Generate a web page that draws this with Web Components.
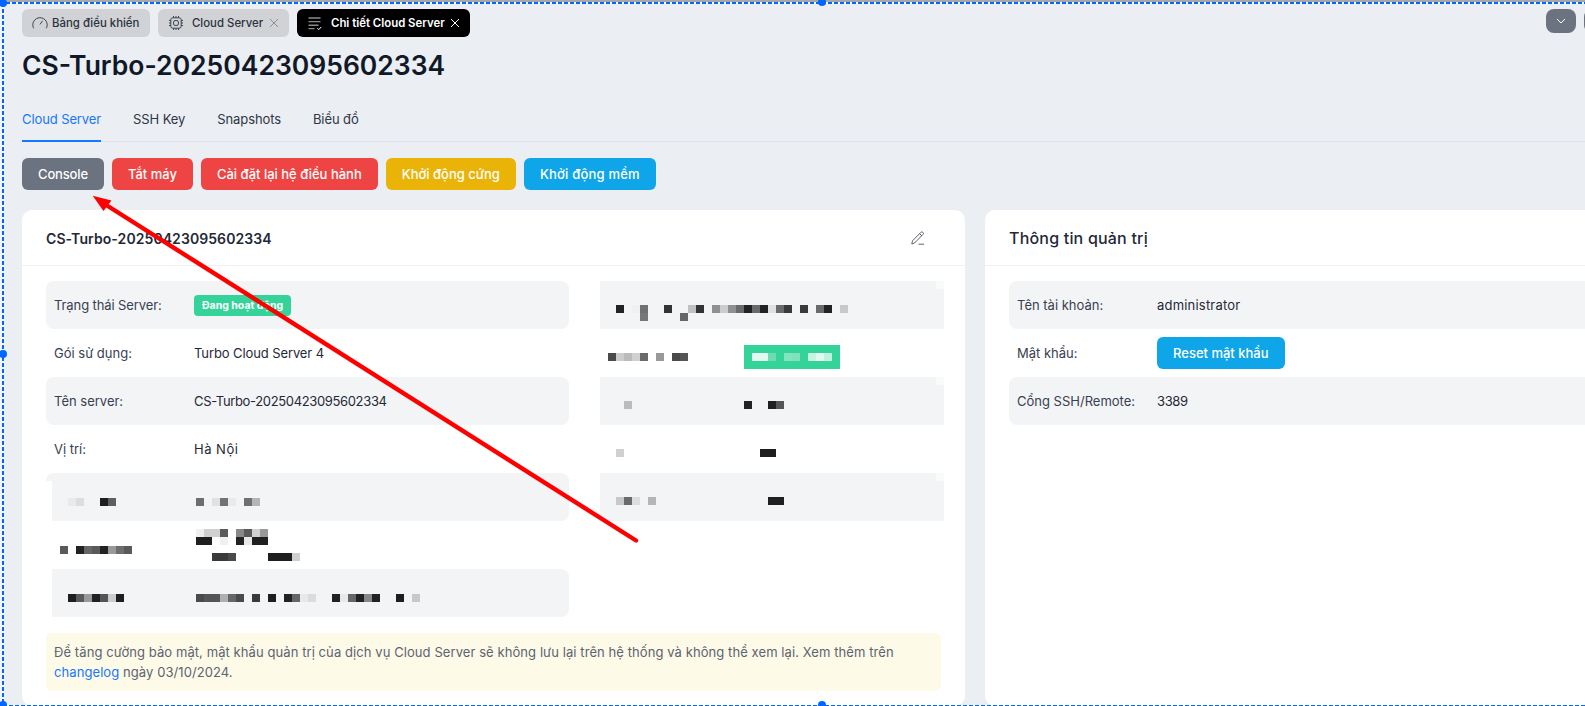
<!DOCTYPE html>
<html lang="vi">
<head>
<meta charset="utf-8">
<title>Chi tiết Cloud Server</title>
<style>
html, body {
  margin: 0;
  height: 100%;
  overflow: hidden;
  background: #ebeef3;
  font-family: Inter, "Noto Sans", sans-serif;
}
</style>
</head>
<body>
<server-page></server-page>

<script>
const ICONS = {
  gauge: '<path d="M1.6 13.2A7.2 7.2 0 1 1 14.4 13.2M8 9.4l2.6-3.6"/>',
  chip: '<rect x="2.8" y="2.8" width="10.4" height="10.4" rx="2"/><rect x="5.6" y="5.6" width="4.8" height="4.8" rx="1.4"/><path d="M5.5 1v1.8M8 1v1.8M10.5 1v1.8M5.5 13.2V15M8 13.2V15M10.5 13.2V15M1 5.5h1.8M1 8h1.8M1 10.5h1.8M13.2 5.5H15M13.2 8H15M13.2 10.5H15"/>',
  list: '<path d="M1.5 3h12M1.5 6.6h12M1.5 10.2h10M1.5 13.6h6" stroke-width="1.4"/><path d="M10.4 13.4l1.4 1.2 2.4-2.6" stroke="#fff" stroke-width="1"/>'
}

customElements.define('tab-chip',
  class extends HTMLElement {
    connectedCallback() {
      const active = this.hasAttribute('active')
      const closable = this.hasAttribute('closable')
      this.attachShadow({ mode: 'open' }).innerHTML = `
<style>
:host {
  display: flex;
  align-items: center;
  height: 28px;
  width: var(--w);
  box-sizing: border-box;
  padding-left: 10px;
  background: #d0d2d6;
  border-radius: 6px;
  color: #2b3340;
  font-size: 11.4px;
  font-weight: 500;
  white-space: nowrap;
}
:host([active]) {
  background: #000;
  color: #fff;
  font-weight: 600;
}
svg {
  flex: none;
  width: 16px;
  height: 16px;
  fill: none;
  stroke: ${active ? '#8a8a8a' : '#3f4650'};
  stroke-width: 1;
}
.label { margin-left: var(--label-gap, 4px); }
.close {
  width: 10px;
  height: 10px;
  margin-left: auto;
  margin-right: 10px;
  stroke: ${active ? '#fff' : '#8b8f96'};
}
</style>
<svg viewBox="0 0 16 16">${ICONS[this.getAttribute('icon')]}</svg>
<span class="label"><slot></slot></span>
${closable ? '<svg class="close" viewBox="0 0 10 10"><path d="M1 1l8 8M9 1L1 9"/></svg>' : ''}
`
    }
  }
)

const topBarTemplate = document.createElement('template')
topBarTemplate.innerHTML = `
<style>
:host {
  display: flex;
  gap: 8px;
  margin-right: -29px;
}
.spacer { flex: 1; }
.drop {
  flex: none;
  width: 30px;
  height: 24px;
  display: flex;
  align-items: center;
  justify-content: center;
  background: #6b7280;
  border-radius: 8px;
}
svg {
  width: 10px;
  height: 6px;
  fill: none;
  stroke: #fff;
  stroke-width: 1;
}
</style>
<slot></slot>
<div class="spacer"></div>
<div class="drop"><svg viewBox="0 0 10 6"><path d="M1 1l4 4 4-4"/></svg></div>
<div class="drop"></div>
`

customElements.define('top-bar',
  class extends HTMLElement {
    constructor() {
      super()
      this.attachShadow({ mode: 'open' })
        .appendChild(topBarTemplate.content.cloneNode(true))
    }
  }
)

const subNavTemplate = document.createElement('template')
subNavTemplate.innerHTML = `
<style>
:host {
  display: flex;
  gap: 32px;
  margin-top: 26px;
  margin-right: -22px;
  border-bottom: 1px solid #dfe3e9;
  font-size: 13px;
  letter-spacing: -.1px;
  color: #2f3744;
}
</style>
<slot></slot>
`

customElements.define('sub-nav',
  class extends HTMLElement {
    constructor() {
      super()
      this.attachShadow({ mode: 'open' })
        .appendChild(subNavTemplate.content.cloneNode(true))
    }
  }
)

const subNavItemTemplate = document.createElement('template')
subNavItemTemplate.innerHTML = `
<style>
:host {
  display: block;
  height: 33px;
  line-height: 21px;
  margin-bottom: -1px;
}
:host([active]) {
  color: #1677ff;
  box-shadow: inset 0 -2px 0 #1677ff;
}
</style>
<slot></slot>
`

customElements.define('sub-nav-item',
  class extends HTMLElement {
    constructor() {
      super()
      this.attachShadow({ mode: 'open' })
        .appendChild(subNavItemTemplate.content.cloneNode(true))
    }
  }
)

const actButtonTemplate = document.createElement('template')
actButtonTemplate.innerHTML = `
<style>
:host {
  display: inline-flex;
  align-items: center;
  height: 32px;
  padding: 0 16px;
  border-radius: 6px;
  background: var(--btn, #6b7280);
  color: #fff;
  font-size: 13px;
  font-weight: 500;
  letter-spacing: var(--track, 0);
  white-space: nowrap;
}
</style>
<slot></slot>
`

customElements.define('act-button',
  class extends HTMLElement {
    constructor() {
      super()
      this.attachShadow({ mode: 'open' })
        .appendChild(actButtonTemplate.content.cloneNode(true))
    }
  }
)

const infoCardTemplate = document.createElement('template')
infoCardTemplate.innerHTML = `
<style>
:host {
  display: block;
  flex: none;
  width: 943px;
  height: 496px;
  box-sizing: border-box;
  background: #fff;
  border-radius: 10px;
}
header {
  display: flex;
  align-items: center;
  justify-content: space-between;
  height: 55px;
  padding: 0 24px;
  border-bottom: 1px solid #eef0f3;
  color: #1f2937;
  font-size: 14px;
  font-weight: 600;
}
.body { padding: 15px 24px; }
</style>
<header><span><slot name="title"></slot></span><slot name="action"></slot></header>
<div class="body"><slot></slot></div>
`

customElements.define('info-card',
  class extends HTMLElement {
    constructor() {
      super()
      this.attachShadow({ mode: 'open' })
        .appendChild(infoCardTemplate.content.cloneNode(true))
    }
  }
)

const infoRowTemplate = document.createElement('template')
infoRowTemplate.innerHTML = `
<style>
:host {
  position: relative;
  display: grid;
  grid-template-columns: 140px 1fr;
  align-items: center;
  height: 48px;
  padding: 0 8px;
  border-radius: 8px;
  color: #374151;
  font-size: 13px;
}
:host([striped]) { background: #f3f4f6; }
.value { color: #1f2937; min-width: 0; }
.cut {
  position: absolute;
  left: 0;
  bottom: 0;
  width: 6px;
  background: #fff;
}
</style>
<div><slot name="label"></slot></div>
<div class="value"><slot></slot></div>
`

customElements.define('info-row',
  class extends HTMLElement {
    constructor() {
      super()
      this.attachShadow({ mode: 'open' })
        .appendChild(infoRowTemplate.content.cloneNode(true))
    }

    connectedCallback() {
      // the blur in the screenshot eats the row corners, redraw those bits
      if (this.hasAttribute('cut')) {
        const cut = document.createElement('div')
        cut.className = 'cut'
        cut.style.top = this.getAttribute('cut') + 'px'
        this.shadowRoot.appendChild(cut)
      }
    }
  }
)

const blurRowTemplate = document.createElement('template')
blurRowTemplate.innerHTML = `
<style>
:host {
  position: relative;
  display: flex;
  align-items: center;
  height: 48px;
  padding-left: 8px;
}
:host([striped]) { background: #f3f4f6; }
.notch {
  position: absolute;
  top: 0;
  right: 0;
  width: 8px;
  height: 8px;
  background: #f9fafa;
}
</style>
<slot></slot>
`

customElements.define('blur-row',
  class extends HTMLElement {
    constructor() {
      super()
      this.attachShadow({ mode: 'open' })
        .appendChild(blurRowTemplate.content.cloneNode(true))
    }

    connectedCallback() {
      if (this.hasAttribute('striped')) {
        const notch = document.createElement('div')
        notch.className = 'notch'
        this.shadowRoot.appendChild(notch)
      }
    }
  }
)

const blurPillTemplate = document.createElement('template')
blurPillTemplate.innerHTML = `
<style>
:host {
  display: block;
  width: 88px;
  margin-top: 8px;
  padding: 8px 0 8px 8px;
  background: #34d399;
}
</style>
<slot></slot>
`

customElements.define('blur-pill',
  class extends HTMLElement {
    constructor() {
      super()
      this.attachShadow({ mode: 'open' })
        .appendChild(blurPillTemplate.content.cloneNode(true))
    }
  }
)

// Redacted text: each line is a run of 8px cells, "." leaves a cell empty.
customElements.define('px-mosaic',
  class extends HTMLElement {
    connectedCallback() {
      const lines = this.getAttribute('cells').split('|').map((line) => line.trim().split(/\s+/))
      const rows = lines.map((line) => `<div class="line">${line.map((c) =>
        `<i style="background:${c === '.' ? 'transparent' : '#' + c}"></i>`).join('')}</div>`).join('')
      this.attachShadow({ mode: 'open' }).innerHTML = `
<style>
:host {
  display: block;
  margin-top: ${this.getAttribute('top') || 0}px;
  margin-left: ${this.getAttribute('left') || 0}px;
  width: ${this.getAttribute('width') ? this.getAttribute('width') + 'px' : 'auto'};
  flex: none;
}
.line { display: flex; height: 8px; }
i { flex: none; display: block; width: 8px; height: 8px; }
</style>
${rows}
`
    }
  }
)

const statusBadgeTemplate = document.createElement('template')
statusBadgeTemplate.innerHTML = `
<style>
:host {
  display: inline-block;
  padding: 0 8px;
  height: 21px;
  line-height: 22px;
  border-radius: 4px;
  background: #34d399;
  color: #fff;
  font-size: 10.5px;
  font-weight: 700;
  vertical-align: middle;
}
</style>
<slot></slot>
`

customElements.define('status-badge',
  class extends HTMLElement {
    constructor() {
      super()
      this.attachShadow({ mode: 'open' })
        .appendChild(statusBadgeTemplate.content.cloneNode(true))
    }
  }
)

const noteBoxTemplate = document.createElement('template')
noteBoxTemplate.innerHTML = `
<style>
:host {
  display: block;
  margin-top: 16px;
  padding: 9px 8px;
  border-radius: 6px;
  background: #fefae8;
  color: #5b6472;
  font-size: 13px;
  letter-spacing: .08px;
  line-height: 20px;
}
</style>
<slot></slot>
`

customElements.define('note-box',
  class extends HTMLElement {
    constructor() {
      super()
      this.attachShadow({ mode: 'open' })
        .appendChild(noteBoxTemplate.content.cloneNode(true))
    }
  }
)

// Screenshot annotations: the red arrow and the dashed selection frame.
const markOverlayTemplate = document.createElement('template')
markOverlayTemplate.innerHTML = `
<style>
:host {
  position: fixed;
  inset: 0;
  pointer-events: none;
}
svg { position: absolute; inset: 0; width: 100%; height: 100%; }
.edge { position: absolute; }
.top {
  top: 0;
  left: 0;
  right: 0;
  height: 4px;
  background:
    repeating-linear-gradient(90deg, #0066ff 0 4px, #fff 4px 6px) 0 2px / 100% 2px no-repeat,
    linear-gradient(#a8a8a8, #a8a8a8) 0 0 / 100% 2px no-repeat;
}
.left {
  top: 3px;
  bottom: 0;
  left: 2px;
  width: 2px;
  background: repeating-linear-gradient(180deg, #0066ff 0 4px, #fff 4px 6px);
}
.strip {
  top: 0;
  bottom: 0;
  left: 0;
  width: 2px;
  background: #f4f4f4;
}
.bottom {
  left: 3px;
  right: 0;
  top: 705px;
  height: 1px;
  background: repeating-linear-gradient(90deg, #0066ff 0 4px, #fff 4px 6px);
}
.dot {
  position: absolute;
  width: 8px;
  height: 8px;
  margin: -4px 0 0 -4px;
  border-radius: 50%;
  background: #0066ff;
}
</style>
<div class="edge strip"></div>
<div class="edge top"></div>
<div class="edge left"></div>
<div class="edge bottom"></div>
<div class="dot" style="left:3px;top:3px"></div>
<div class="dot" style="left:822px;top:2px"></div>
<div class="dot" style="left:3px;top:354px"></div>
<div class="dot" style="left:3px;top:705px"></div>
<div class="dot" style="left:822px;top:705px"></div>
<svg viewBox="0 0 1585 706">
  <line x1="636" y1="540.5" x2="107" y2="205.5" stroke="#ff0000" stroke-width="4.4" stroke-linecap="round"/>
  <polygon points="92.7,195.7 111.5,200.6 103.5,211" fill="#ff0000"/>
</svg>
`

customElements.define('mark-overlay',
  class extends HTMLElement {
    constructor() {
      super()
      this.attachShadow({ mode: 'open' })
        .appendChild(markOverlayTemplate.content.cloneNode(true))
    }
  }
)

const serverPageTemplate = document.createElement('template')
serverPageTemplate.innerHTML = `
<style>
:host {
  display: block;
  box-sizing: border-box;
  height: 706px;
  padding: 9px 0 0 22px;
  overflow: hidden;
  font-family: Inter, "Noto Sans", sans-serif;
}
.chips { display: flex; gap: 8px; }
h1 {
  margin: 10px 0 0;
  color: #111827;
  font-size: 26.5px;
  line-height: 36px;
  font-weight: 600;
}
.actions {
  display: flex;
  gap: 8px;
  margin-top: 16px;
}
.cards {
  display: flex;
  gap: 20px;
  margin-top: 20px;
}
.columns {
  display: grid;
  grid-template-columns: 523px 344px;
  column-gap: 31px;
}
.edit {
  width: 14px;
  height: 14px;
  margin-right: 16px;
  fill: none;
  stroke: #5b6472;
  stroke-width: 1;
}
a { color: #1677ff; text-decoration: none; }
.server-title { display: inline-block; padding-top: 2px; letter-spacing: .08px; }
.admin-title { font-size: 16px; font-weight: 500; letter-spacing: .2px; }
.tight { letter-spacing: -.1px; }
.digits { letter-spacing: -.35px; }
.wide { letter-spacing: .2px; }
.place { letter-spacing: .5px; }
.port { letter-spacing: -.4px; }
</style>
<top-bar>
  <div class="chips">
    <tab-chip icon="gauge" style="--w:128px">Bảng điều khiển</tab-chip>
    <tab-chip icon="chip" closable style="--w:131px;--label-gap:8px">Cloud Server</tab-chip>
    <tab-chip icon="list" closable active style="--w:173px;--label-gap:8px">Chi tiết Cloud Server</tab-chip>
  </div>
</top-bar>
<h1>CS-Turbo-20250423095602334</h1>
<sub-nav>
  <sub-nav-item active>Cloud Server</sub-nav-item>
  <sub-nav-item>SSH Key</sub-nav-item>
  <sub-nav-item>Snapshots</sub-nav-item>
  <sub-nav-item>Biểu đồ</sub-nav-item>
</sub-nav>
<div class="actions">
  <act-button style="--track:-.15px">Console</act-button>
  <act-button style="--btn:#ef4444">Tắt máy</act-button>
  <act-button style="--btn:#ef4444">Cài đặt lại hệ điều hành</act-button>
  <act-button style="--btn:#eab308">Khởi động cứng</act-button>
  <act-button style="--btn:#0ea5e9;--track:.2px">Khởi động mềm</act-button>
</div>
<div class="cards">
  <info-card>
    <span slot="title" class="server-title">CS-Turbo-20250423095602334</span>
    <svg slot="action" class="edit" viewBox="0 0 14 14"><path d="M.8 13l.7-3.2L9.9 1.3a1.3 1.3 0 0 1 1.9 0l.2.2a1.3 1.3 0 0 1 0 1.9L3.6 12zM8.6 2.6l2.4 2.4M7.5 13.2h5.5"/></svg>
    <div class="columns">
      <div>
        <info-row striped><span slot="label" class="tight">Trạng thái Server:</span><status-badge>Đang hoạt động</status-badge></info-row>
        <info-row><span slot="label">Gói sử dụng:</span><span class="tight">Turbo Cloud Server 4</span></info-row>
        <info-row striped><span slot="label">Tên server:</span><span class="digits">CS-Turbo-20250423095602334</span></info-row>
        <info-row><span slot="label">Vị trí:</span><span class="place">Hà Nội</span></info-row>
        <info-row striped cut="8">
          <px-mosaic slot="label" top="10" left="14" cells="e9eaec dcdde0 . . 1f1f1f 5f5f5f"></px-mosaic>
          <px-mosaic top="10" left="2" cells="6d6d6d . e0e1e3 727272 e9eaec . 707070 b5b5b5"></px-mosaic>
        </info-row>
        <info-row>
          <px-mosaic slot="label" top="9" left="6" cells="5a5a5a . 222222 666666 5a5a5a 222222 999999 6e6e6e 5a5a5a"></px-mosaic>
          <px-mosaic left="2" cells="f0f0f0 d0d0d0 d0d0d0 5a5a5a . 888888 5a5a5a d0d0d0 999999|1f1f1f 1f1f1f . f0f0f0 . 222222 e8e8e8 1f1f1f 1f1f1f|.|. . 3a3a3a 3a3a3a 4a4a4a . . . . 1f1f1f 1f1f1f 1f1f1f d0d0d0"></px-mosaic>
        </info-row>
        <info-row striped cut="0">
          <px-mosaic slot="label" top="9" left="14" cells="1f1f1f 5a5a5a 999999 222222 555555 cccccc 1f1f1f"></px-mosaic>
          <px-mosaic top="9" left="2" cells="4a4a4a 555555 555555 b0b0b0 666666 4a4a4a . 3a3a3a . 1f1f1f . 222222 666666 e8e8e8 dcdcdc . . 222222 e8e8e8 666666 222222 888888 222222 . . 1f1f1f . c8c8c8"></px-mosaic>
        </info-row>
      </div>
      <div>
        <blur-row striped>
          <px-mosaic top="16" cells=". 222222 . f0f0f2 707070 . . 333333 . . c0c0c0 333333 . 909090 cccccc 909090 6a6a6a 222222 6a6a6a 222222 e0e0e2 6a6a6a 3a3a3a . 3a3a3a . 6a6a6a 222222 . c8c8c8|. . . . 777777 . . . . 666666"></px-mosaic>
        </blur-row>
        <blur-row>
          <px-mosaic top="8" width="136" cells="4a4a4a cccccc bbbbbb d0d0d0 6a6a6a . 999999 . 4a4a4a 555555"></px-mosaic>
          <blur-pill><px-mosaic cells="e3f8f0 e3f8f0 6edcb3 . 85e3bf 80e2bd . c8f3e3 e3f8f0 c0f1df"></px-mosaic></blur-pill>
        </blur-row>
        <blur-row striped>
          <px-mosaic top="8" width="136" cells=". . bbbbbb"></px-mosaic>
          <px-mosaic top="8" cells="222222 . . 1f1f1f 555555"></px-mosaic>
        </blur-row>
        <blur-row>
          <px-mosaic top="8" width="136" cells=". d0d0d0"></px-mosaic>
          <px-mosaic top="8" cells=". . 1f1f1f 1f1f1f"></px-mosaic>
        </blur-row>
        <blur-row striped>
          <px-mosaic top="8" width="136" cells=". c8c8c8 6a6a6a dcdde0 . b5b5b5"></px-mosaic>
          <px-mosaic top="8" cells=". . . 1f1f1f 1f1f1f"></px-mosaic>
        </blur-row>
      </div>
    </div>
    <note-box>Để tăng cường bảo mật, mật khẩu quản trị của dịch vụ Cloud Server sẽ không lưu lại trên hệ thống và không thể xem lại. Xem thêm trên <a href="#">changelog</a> ngày 03/10/2024.</note-box>
  </info-card>
  <info-card>
    <span slot="title" class="admin-title">Thông tin quản trị</span>
    <info-row striped><span slot="label">Tên tài khoản:</span><span class="wide">administrator</span></info-row>
    <info-row><span slot="label">Mật khẩu:</span><act-button style="--btn:#0ea5e9">Reset mật khẩu</act-button></info-row>
    <info-row striped><span slot="label">Cổng SSH/Remote:</span><span class="port">3389</span></info-row>
  </info-card>
</div>
<mark-overlay></mark-overlay>
`

customElements.define('server-page',
  class extends HTMLElement {
    constructor() {
      super()
      this.attachShadow({ mode: 'open' })
        .appendChild(serverPageTemplate.content.cloneNode(true))
    }
  }
)
</script>
</body>
</html>
